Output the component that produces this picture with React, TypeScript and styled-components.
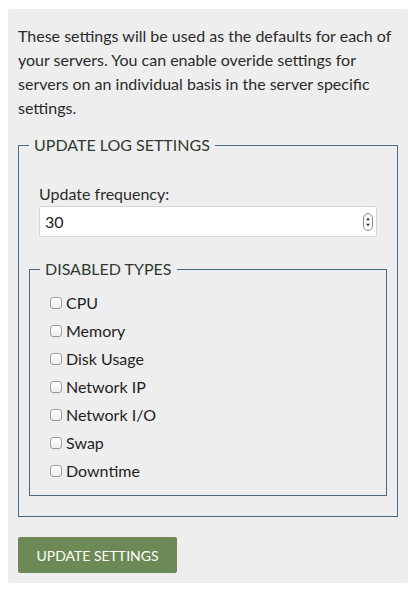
import styled, { createGlobalStyle } from 'styled-components';

const GlobalStyle = createGlobalStyle`
  html, body {
    margin: 0;
    padding: 0;
    background: #ffffff;
  }
  body {
    font-family: Lato, "Open Sans", "Liberation Sans", sans-serif;
    color: #2b2b2b;
  }
`;

const types = ['CPU', 'Memory', 'Disk Usage', 'Network IP', 'Network I/O', 'Swap', 'Downtime'];

const Stepper = () => (
  <StepperBox>
    <svg width="10" height="18" viewBox="0 0 10 18">
      <rect x="0.5" y="0.5" width="9" height="17" rx="4.5" fill="#fbfbfb" stroke="#8a8a8a" />
      <path d="M5 4.5 L6.8 7.2 L3.2 7.2 Z" fill="#333" />
      <path d="M5 13.5 L6.8 10.8 L3.2 10.8 Z" fill="#333" />
    </svg>
  </StepperBox>
);

export default function App() {
  return (
    <>
      <GlobalStyle />
      <Panel>
        <Intro>
          These settings will be used as the defaults for each of your servers. You can enable
          overide settings for servers on an individual basis in the server specific settings.
        </Intro>
        <OuterFieldset>
          <Legend>UPDATE LOG SETTINGS</Legend>
          <FormGroup>
            <Label htmlFor="freq">Update frequency:</Label>
            <InputWrap>
              <NumberInput id="freq" type="number" defaultValue={30} />
              <Stepper />
            </InputWrap>
          </FormGroup>
          <InnerFieldset>
            <Legend>DISABLED TYPES</Legend>
            <CheckList>
              {types.map((t) => (
                <CheckRow key={t}>
                  <Check type="checkbox" />
                  {t}
                </CheckRow>
              ))}
            </CheckList>
          </InnerFieldset>
        </OuterFieldset>
        <SubmitButton type="button">UPDATE SETTINGS</SubmitButton>
      </Panel>
    </>
  );
}

const Panel = styled.div`
  margin: 9px 7px 0 8px;
  width: 400px;
  box-sizing: border-box;
  padding: 15px 10px 10px 10px;
  background-color: #eeeeee;
  border-radius: 3px;
`;

const Intro = styled.p`
  margin: 0 0 13px 0;
  font-size: 16px;
  line-height: 24px;
  color: #2b2b2b;
`;

const OuterFieldset = styled.fieldset`
  margin: 0;
  padding: 25px 10px 20px 10px;
  border: 1px solid #4d6c82;
  min-width: 0;
`;

const Legend = styled.legend`
  padding: 0 5px;
  margin: 0;
  font-size: 16px;
  line-height: 24px;
  color: #2f3a2f;
`;

const FormGroup = styled.div`
  padding: 0 10px;
  display: flex;
  flex-direction: column;
`;

const Label = styled.label`
  font-size: 16px;
  line-height: 24px;
  color: #2b2b2b;
`;

const InputWrap = styled.div`
  position: relative;
`;

const NumberInput = styled.input`
  display: block;
  width: 100%;
  box-sizing: border-box;
  height: 31px;
  padding: 0 5px;
  border: 1px solid #d6d6d6;
  border-radius: 2px;
  background: #ffffff;
  font-family: inherit;
  font-size: 16px;
  color: #1e1e1e;
  -moz-appearance: textfield;
  &::-webkit-inner-spin-button,
  &::-webkit-outer-spin-button {
    -webkit-appearance: none;
    margin: 0;
  }
  &:focus {
    outline: none;
  }
`;

const StepperBox = styled.span`
  position: absolute;
  right: 4px;
  top: 7px;
  display: flex;
  pointer-events: none;
`;

const InnerFieldset = styled.fieldset`
  margin: 20px 0 0 0;
  padding: 7px 10px 11px 10px;
  border: 1px solid #4d6c82;
  min-width: 0;
`;

const CheckList = styled.div`
  display: flex;
  flex-direction: column;
  padding-left: 10px;
`;

const CheckRow = styled.label`
  display: flex;
  align-items: center;
  gap: 4px;
  height: 28px;
  font-size: 16px;
  color: #1e1e1e;
`;

const Check = styled.input`
  appearance: none;
  -webkit-appearance: none;
  width: 12px;
  height: 12px;
  margin: 2px 0 0 0;
  border: 1px solid #9a9a9a;
  border-radius: 3px;
  background: linear-gradient(#ffffff, #eeeeee);
  box-sizing: border-box;
`;

const SubmitButton = styled.button`
  margin-top: 20px;
  width: 159px;
  height: 36px;
  border: none;
  border-radius: 2px;
  background-color: #6d8a56;
  color: #ffffff;
  font-family: inherit;
  font-size: 14px;
  cursor: pointer;
`;
